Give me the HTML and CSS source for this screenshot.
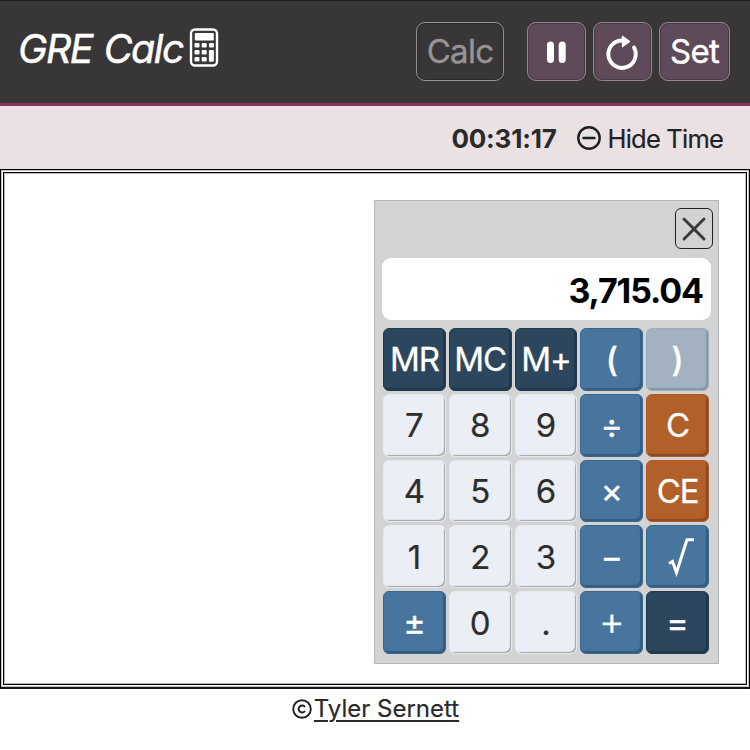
FILE: index.html
```
<!DOCTYPE html>
<html lang="en">
<head>
<meta charset="utf-8">
<title>GRE Calc</title>
<link rel="stylesheet" href="styles.css">
</head>
<body>
<header class="header">
  <h1 class="brand"><span class="brand-text">GRE Calc</span>
    <svg class="brand-icon" viewBox="0 0 30 40"><rect x="2" y="1.5" width="26" height="36" rx="4" fill="none" stroke="#fff" stroke-width="2.4"/><g fill="#fff"><rect x="5.8" y="5" width="19" height="7.6" rx="1"/><rect x="5.5" y="15" width="5" height="4.6" rx="1"/><rect x="12.7" y="15" width="5" height="4.6" rx="1"/><rect x="19.9" y="15" width="5" height="4.6" rx="1"/><rect x="5.5" y="22" width="5" height="4.6" rx="1"/><rect x="12.7" y="22" width="5" height="4.6" rx="1"/><rect x="19.9" y="22" width="5" height="11.7" rx="1"/><rect x="5.5" y="29" width="5" height="4.6" rx="1"/><rect x="12.7" y="29" width="5" height="4.6" rx="1"/></g></svg>
  </h1>
  <nav class="actions">
    <button class="btn btn-off">Calc</button>
    <button class="btn btn-icon" aria-label="Pause"><svg width="59" height="60" viewBox="0 0 59 60"><path d="M23.500 23v14.5M35.200 23v14.500" stroke="#fff" stroke-width="7" stroke-linecap="round"/></svg></button>
    <button class="btn btn-icon" aria-label="Reset"><svg width="59" height="60" viewBox="0 0 59 60"><path d="M30 18.500A13.700 13.700 0 1 0 41 25.500" fill="none" stroke="#fff" stroke-width="3.900" stroke-linecap="round"/><path d="M29.300 14L37 19.500L29.300 25Z" fill="#fff" stroke="#fff" stroke-linejoin="round"/></svg></button>
    <button class="btn btn-set">Set</button>
  </nav>
</header>
<div class="timer">
  <strong class="time">00:31:17</strong>
  <svg class="minus" viewBox="0 0 24 24"><circle cx="12" cy="12" r="10.700" fill="none" stroke="#1b2026" stroke-width="2.400"/><path d="M6.500 12h11" stroke="#1b2026" stroke-width="2.400" stroke-linecap="round"/></svg>
  <span class="hide">Hide Time</span>
</div>
<main class="stage">
  <div class="stage-inner">
    <section class="calc">
      <button class="close" aria-label="Close"><svg viewBox="0 0 38 41"><path d="M9 11L29 31M29 11L9 31" stroke="#39393b" stroke-width="2.900" stroke-linecap="round"/></svg></button>
      <output class="display">3,715.04</output>
      <div class="keys">
        <button class="key navy">MR</button><button class="key navy">MC</button><button class="key navy">M+</button><button class="key blue paren">(</button><button class="key faded paren">)</button>
        <button class="key">7</button><button class="key">8</button><button class="key">9</button><button class="key blue op">÷</button><button class="key rust">C</button>
        <button class="key">4</button><button class="key">5</button><button class="key">6</button><button class="key blue op">×</button><button class="key rust">CE</button>
        <button class="key">1</button><button class="key">2</button><button class="key">3</button><button class="key blue op">−</button><button class="key blue" aria-label="Square root"><svg width="63" height="63" viewBox="0 0 63 63"><path d="M23 37.500L26.500 35.500L30.500 46.500L41 13.700H48" fill="none" stroke="#fff" stroke-width="3"/></svg></button>
        <button class="key blue op">±</button><button class="key">0</button><button class="key">.</button><button class="key blue plus">+</button><button class="key navy op">=</button>
      </div>
    </section>
  </div>
</main>
<footer class="footer"><svg class="copyright" viewBox="0 0 20 20"><circle cx="10" cy="10" r="8.800" fill="none" stroke="#202124" stroke-width="1.900"/><path d="M13 8A3.500 3.500 0 1 0 13 12" fill="none" stroke="#202124" stroke-width="2"/></svg><a class="author">Tyler Sernett</a></footer>
</body>
</html>
```
FILE: styles.css
```
* { box-sizing: border-box; }
body { margin: 0; height: 750px; overflow: hidden; background: #fff; color: #292a2b; font-family: Inter, "Liberation Sans", sans-serif; }
button { margin: 0; padding: 0; font: inherit; }
.header { height: 106px; display: flex; justify-content: space-between; padding: 21px 21px 0 18px; background: #393637; border-top: 1px solid #1e1c1d; border-bottom: 3px solid #84355e; }
.brand { display: flex; margin: 0; height: 56px; color: #fff; font-size: 39.5px; font-weight: 400; font-style: italic; line-height: 55px; letter-spacing: -1.5px; word-spacing: 2px; -webkit-text-stroke: .5px #fff; }
.brand-text { width: 171px; white-space: nowrap; }
.brand-icon { width: 30px; height: 40px; margin-top: 6px; }
.actions { display: flex; gap: 7px; }
.btn { height: 59px; border: 1.5px solid #958593; border-radius: 9px; background: #5e4a59; color: #fff; font-size: 33px; line-height: 55px; letter-spacing: -.7px; -webkit-text-stroke: .4px currentColor; box-shadow: inset 0 0 0 1px #4b3b47; }
.btn-off { width: 88px; margin-right: 16px; background: #393637; border-color: #969495; color: #969495; box-shadow: inset 0 0 0 1px #2b292a; }
.btn-icon { width: 59px; display: flex; align-items: center; justify-content: center; }
.btn-icon svg { flex: none; }
.btn-set { width: 71px; }
.actions { margin-right: -1px; }
.timer { height: 63px; display: flex; align-items: center; justify-content: flex-end; padding: 1px 27px 0 0; background: #ece1e2; }
.time { font-size: 26px; font-weight: 700; letter-spacing: -.2px; margin-right: 20px; }
.minus { width: 24px; height: 24px; margin-right: 7px; }
.hide { font-size: 25.5px; color: #202326; letter-spacing: -.8px; -webkit-text-stroke: .2px currentColor; }
.stage { height: 520px; padding: 2px; border: 1px solid #000; border-bottom: 2px solid #19171a; box-shadow: inset 0 0 0 1px #c4c4c6; }
.stage-inner { height: 100%; display: flex; justify-content: flex-end; align-items: flex-start; padding: 27px 27px 0 0; border: 1px solid #000; box-shadow: inset 0 0 0 1px #b9b9bb; }
.calc { width: 345px; height: 464px; padding: 7px 7px 0; display: flex; flex-direction: column; background: #d3d3d3; border: 1.5px solid #b4b7b7; }
.close { width: 38px; height: 41px; align-self: flex-end; margin-right: -2px; background: transparent; border: 1.5px solid #222; border-radius: 6px; }
.close svg { display: block; width: 38px; height: 41px; margin: -1.5px; }
.display { height: 62px; margin-top: 9px; padding-right: 8px; text-align: right; background: #fff; border-radius: 9px; color: #000; font-size: 34px; font-weight: 700; line-height: 66px; letter-spacing: -1.1px; }
.keys { width: 326px; height: 326px; margin: 8px 0 0 1px; display: grid; grid-template-columns: repeat(5, 1fr); grid-template-rows: repeat(5, minmax(0, 1fr)); gap: 3px; }
.key { min-width: 0; min-height: 0; display: flex; align-items: center; justify-content: center; padding-top: 1px; border: 1px solid #e5e8ed; border-radius: 6px; background: #ebeef4; color: #2d2d2d; font-size: 33px; line-height: 1; box-shadow: inset -2px -2px 1px -1px #a2a5aa; -webkit-text-stroke: .2px currentColor; }
.key svg { flex: none; }
.blue, .navy, .rust, .faded { color: #fff; -webkit-text-stroke: .3px currentColor; }
.blue { background: #48759d; border-color: #38678f; box-shadow: inset -2px -2px 1px #365c7f; }
.navy { background: #2c465e; border-color: #203a52; letter-spacing: -1.1px; box-shadow: inset -2px -2px 1px #203850; }
.rust { background: #b16029; border-color: #b05b20; letter-spacing: -1.1px; box-shadow: inset -2px -2px 1px #874a24; }
.faded { background: #a3b2c0; border-color: #9baebd; box-shadow: inset -2px -2px 1px #8796a3; }
.paren { font-weight: 500; }
.op { font-size: 34px; letter-spacing: 0; }
.plus { padding: 0 0 4px; font-size: 40px; font-weight: 300; }
.footer { display: flex; align-items: center; justify-content: center; height: 40px; padding-left: 1px; }
.copyright { width: 20px; height: 20px; margin-right: 2px; }
.author { font-size: 24px; line-height: 30px; -webkit-text-stroke: .2px currentColor; text-decoration: underline; text-decoration-thickness: 2px; text-underline-offset: 3px; }
```
